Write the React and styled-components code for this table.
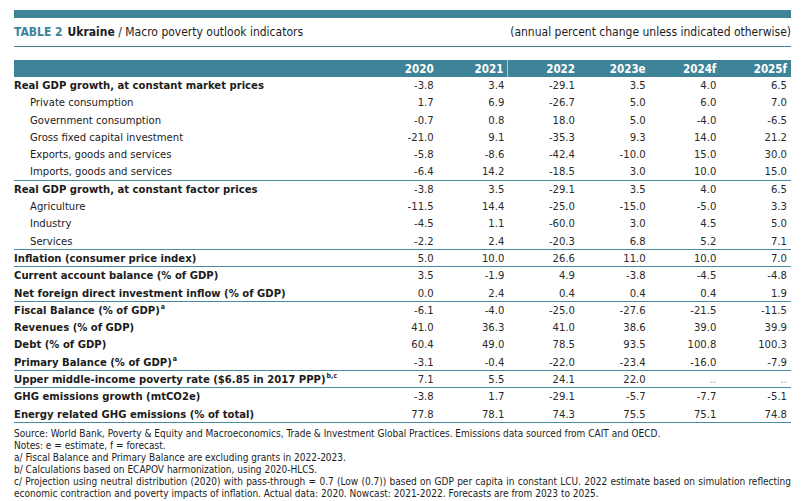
import React from 'react';
import styled, { createGlobalStyle } from 'styled-components';

const GlobalStyle = createGlobalStyle`
  html, body {
    margin: 0;
    padding: 0;
    background: #ffffff;
  }
  body {
    font-family: "DejaVu Sans Condensed", "DejaVu Sans", Verdana, sans-serif;
    color: #1c1c1c;
  }
`;

const Page = styled.div`
  width: 777px;
  padding: 10px 10px 0 14px;
`;

const TopBar = styled.div`
  height: 8px;
  background: #3f8399;
`;

const TitleRow = styled.div`
  display: flex;
  justify-content: space-between;
  align-items: center;
  height: 28px;
  border-bottom: 1.5px solid #3f8399;
  font-size: 12px;
`;

const TitleLeft = styled.div`
  white-space: nowrap;
`;

const TableNo = styled.span`
  color: #3f8399;
  font-weight: 700;
  margin-right: 5px;
`;

const Country = styled.span`
  font-weight: 700;
`;

const TitleRight = styled.div`
  white-space: nowrap;
`;

const Grid = styled.div`
  display: grid;
  grid-template-columns: 353px repeat(6, 1fr);
  margin-top: 13px;
`;

const HeadCell = styled.div`
  background: #3f8399;
  color: #ffffff;
  font-weight: 700;
  font-size: 11.5px;
  height: 17px;
  line-height: 18px;
  text-align: right;
  padding-right: 4px;
  box-sizing: border-box;
  border-right: ${(p) => (p.$divider ? '1px solid #a9cbd6' : 'none')};
`;

const Row = styled.div`
  display: contents;
`;

const Label = styled.div`
  height: 17.3px;
  line-height: 17.8px;
  font-size: 11.2px;
  font-weight: ${(p) => (p.$sub ? 400 : 700)};
  padding-left: ${(p) => (p.$sub ? '16px' : '0')};
  white-space: nowrap;
  border-bottom: ${(p) => (p.$line ? '1.5px solid #4a8ba3' : 'none')};
  box-sizing: border-box;
`;

const Value = styled.div`
  height: 17.3px;
  line-height: 17.8px;
  font-size: 11.2px;
  text-align: right;
  padding-right: 4px;
  color: ${(p) => (p.$muted ? '#9a9a9a' : '#2a2a2a')};
  border-bottom: ${(p) => (p.$line ? '1.5px solid #4a8ba3' : 'none')};
  box-sizing: border-box;
`;

const Sup = styled.sup`
  font-size: 7px;
  line-height: 0;
  vertical-align: 5px;
  margin-left: 1px;
`;

const Notes = styled.div`
  padding-top: 5px;
  font-size: 10px;
  color: #1c1c1c;
`;

const Note = styled.div`
  line-height: 12px;
  text-align: ${(p) => (p.$justify ? 'justify' : 'left')};
  text-align-last: left;
`;

const years = ['2020', '2021', '2022', '2023e', '2024f', '2025f'];

const rows = [
  { label: 'Real GDP growth, at constant market prices', v: ['-3.8', '3.4', '-29.1', '3.5', '4.0', '6.5'] },
  { label: 'Private consumption', sub: true, v: ['1.7', '6.9', '-26.7', '5.0', '6.0', '7.0'] },
  { label: 'Government consumption', sub: true, v: ['-0.7', '0.8', '18.0', '5.0', '-4.0', '-6.5'] },
  { label: 'Gross fixed capital investment', sub: true, v: ['-21.0', '9.1', '-35.3', '9.3', '14.0', '21.2'] },
  { label: 'Exports, goods and services', sub: true, v: ['-5.8', '-8.6', '-42.4', '-10.0', '15.0', '30.0'] },
  { label: 'Imports, goods and services', sub: true, line: true, v: ['-6.4', '14.2', '-18.5', '3.0', '10.0', '15.0'] },
  { label: 'Real GDP growth, at constant factor prices', v: ['-3.8', '3.5', '-29.1', '3.5', '4.0', '6.5'] },
  { label: 'Agriculture', sub: true, v: ['-11.5', '14.4', '-25.0', '-15.0', '-5.0', '3.3'] },
  { label: 'Industry', sub: true, v: ['-4.5', '1.1', '-60.0', '3.0', '4.5', '5.0'] },
  { label: 'Services', sub: true, line: true, v: ['-2.2', '2.4', '-20.3', '6.8', '5.2', '7.1'] },
  { label: 'Inflation (consumer price index)', line: true, v: ['5.0', '10.0', '26.6', '11.0', '10.0', '7.0'] },
  { label: 'Current account balance (% of GDP)', v: ['3.5', '-1.9', '4.9', '-3.8', '-4.5', '-4.8'] },
  { label: 'Net foreign direct investment inflow (% of GDP)', line: true, v: ['0.0', '2.4', '0.4', '0.4', '0.4', '1.9'] },
  { label: 'Fiscal Balance (% of GDP)', sup: 'a', v: ['-6.1', '-4.0', '-25.0', '-27.6', '-21.5', '-11.5'] },
  { label: 'Revenues (% of GDP)', v: ['41.0', '36.3', '41.0', '38.6', '39.0', '39.9'] },
  { label: 'Debt (% of GDP)', v: ['60.4', '49.0', '78.5', '93.5', '100.8', '100.3'] },
  { label: 'Primary Balance (% of GDP)', sup: 'a', line: true, v: ['-3.1', '-0.4', '-22.0', '-23.4', '-16.0', '-7.9'] },
  { label: 'Upper middle-income poverty rate ($6.85 in 2017 PPP)', sup: 'b,c', line: true, v: ['7.1', '5.5', '24.1', '22.0', '..', '..'] },
  { label: 'GHG emissions growth (mtCO2e)', v: ['-3.8', '1.7', '-29.1', '-5.7', '-7.7', '-5.1'] },
  { label: 'Energy related GHG emissions (% of total)', line: true, v: ['77.8', '78.1', '74.3', '75.5', '75.1', '74.8'] },
];

const App = () => (
  <>
    <GlobalStyle />
    <Page>
      <TopBar />
      <TitleRow>
        <TitleLeft>
          <TableNo>TABLE 2</TableNo>
          <Country>Ukraine</Country> / Macro poverty outlook indicators
        </TitleLeft>
        <TitleRight>(annual percent change unless indicated otherwise)</TitleRight>
      </TitleRow>

      <Grid>
        <HeadCell />
        {years.map((y) => (
          <HeadCell key={y} $divider={y === '2021'}>{y}</HeadCell>
        ))}
        {rows.map((r) => (
          <Row key={r.label}>
            <Label $sub={r.sub} $line={r.line}>
              {r.label}
              {r.sup && <Sup>{r.sup}</Sup>}
            </Label>
            {r.v.map((val, i) => (
              <Value key={i} $line={r.line} $muted={val === '..'}>{val}</Value>
            ))}
          </Row>
        ))}
      </Grid>

      <Notes>
        <Note>Source: World Bank, Poverty &amp; Equity and Macroeconomics, Trade &amp; Investment Global Practices. Emissions data sourced from CAIT and OECD.</Note>
        <Note>Notes: e = estimate, f = forecast.</Note>
        <Note>a/ Fiscal Balance and Primary Balance are excluding grants in 2022-2023.</Note>
        <Note>b/ Calculations based on ECAPOV harmonization, using 2020-HLCS.</Note>
        <Note $justify>c/ Projection using neutral distribution (2020) with pass-through = 0.7 (Low (0.7)) based on GDP per capita in constant LCU. 2022 estimate based on simulation reflecting economic contraction and poverty impacts of inflation. Actual data: 2020. Nowcast: 2021-2022. Forecasts are from 2023 to 2025.</Note>
      </Notes>
    </Page>
  </>
);

export default App;
